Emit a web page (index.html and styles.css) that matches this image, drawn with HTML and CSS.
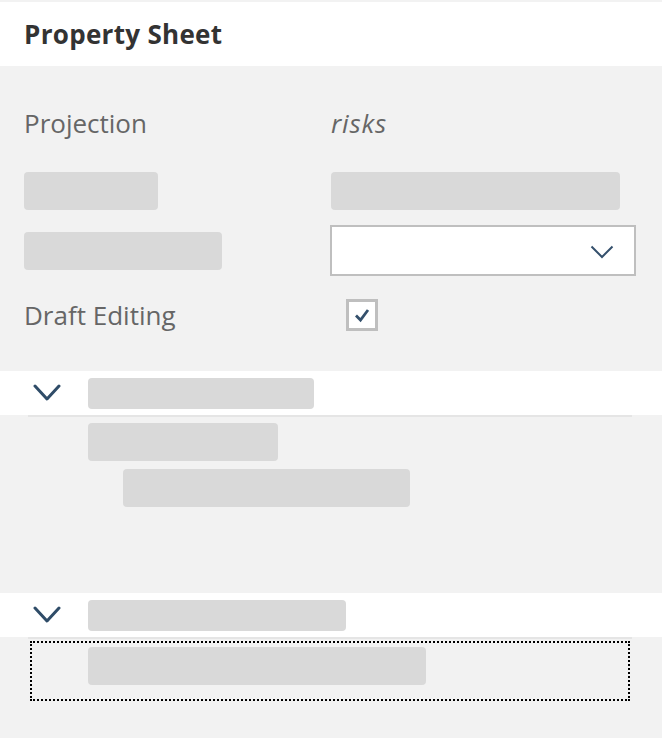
FILE: index.html
```html
<!DOCTYPE html>
<html>
<head>
<meta charset="utf-8">
<link rel="stylesheet" href="styles.css">
</head>
<body>
<div class="panel">
  <header class="header"><h1 class="title">Property Sheet</h1></header>
  <div class="form">
    <div class="row row-projection">
      <span class="label">Projection</span>
      <span class="value-italic">risks</span>
    </div>
    <div class="row row-skel">
      <div class="skel" style="width:134px"></div>
      <div class="skel" style="width:289px"></div>
    </div>
    <div class="row row-select">
      <div class="skel" style="width:198px"></div>
      <div class="select">
        <svg class="chev-sm" width="24" height="14" viewBox="0 0 24 14"><path d="M1.5 1.5 L12 12 L22.5 1.5" fill="none" stroke="#34506c" stroke-width="2"/></svg>
      </div>
    </div>
    <div class="row row-check">
      <span class="label">Draft Editing</span>
      <div class="checkbox">
        <svg width="18" height="18" viewBox="0 0 18 18"><path d="M3 9.5 L7.5 14 L15 4" fill="none" stroke="#34506c" stroke-width="2.8"/></svg>
      </div>
    </div>
  </div>

  <section class="section sec1">
    <div class="sec-head">
      <svg class="chev" width="28" height="18" viewBox="0 0 28 18"><path d="M2 2 L14 15 L26 2" fill="none" stroke="#2f4c68" stroke-width="3" stroke-linecap="round" stroke-linejoin="round"/></svg>
      <div class="skel skel-head" style="width:226px"></div>
    </div>
    <div class="sec-line"></div>
    <div class="sec-body">
      <div class="skel" style="width:190px"></div>
      <div class="skel indent" style="width:287px"></div>
    </div>
  </section>

  <section class="section sec2">
    <div class="sec-head">
      <svg class="chev" width="28" height="18" viewBox="0 0 28 18"><path d="M2 2 L14 15 L26 2" fill="none" stroke="#2f4c68" stroke-width="3" stroke-linecap="round" stroke-linejoin="round"/></svg>
      <div class="skel skel-head" style="width:258px"></div>
    </div>
    <div class="sec-line"></div>
    <div class="focus-box">
      <div class="skel" style="width:338px"></div>
    </div>
  </section>
</div>
</body>
</html>
```

FILE: styles.css
```css
html, body {
  margin: 0;
  padding: 0;
  background: #f2f2f2;
}
body {
  font-family: "Open Sans", "Noto Sans", sans-serif;
  width: 662px;
  height: 738px;
  overflow: hidden;
}
.panel {
  padding-top: 2px;
}
.header {
  background: #ffffff;
  height: 64px;
  display: flex;
  align-items: center;
  padding-left: 24px;
}
.title {
  margin: 0;
  font-size: 26px;
  font-weight: 700;
  color: #333333;
  letter-spacing: 0.3px;
}
.form {
  padding: 0 0 0 24px;
  display: flex;
  flex-direction: column;
}
.row {
  display: grid;
  grid-template-columns: 307px 1fr;
  align-items: center;
}
.row-projection {
  height: 58px;
  margin-top: 28px;
}
.label {
  font-size: 26px;
  color: #666666;
}
.value-italic {
  font-size: 26px;
  font-style: italic;
  color: #666666;
  letter-spacing: 0.8px;
}
.skel {
  background: #d9d9d9;
  border-radius: 4px;
  height: 38px;
}
.row-skel {
  margin-top: 20px;
}
.row-select {
  margin-top: 15px;
  grid-template-columns: 306px 1fr;
}
.select {
  width: 306px;
  height: 51px;
  box-sizing: border-box;
  border: 2px solid #bfbfbf;
  background: #ffffff;
  display: flex;
  align-items: center;
  justify-content: flex-end;
  padding-right: 20px;
}
.chev-sm {
  display: block;
  margin-top: 2px;
}
.row-check {
  margin-top: 21px;
  height: 34px;
}
.checkbox {
  width: 32px;
  height: 32px;
  box-sizing: border-box;
  border: 3px solid #bfbfbf;
  background: #ffffff;
  margin-left: 15px;
  display: flex;
  align-items: center;
  justify-content: center;
}
.checkbox svg {
  display: block;
}
.section {
  display: flex;
  flex-direction: column;
}
.sec1 {
  margin-top: 40px;
  height: 222px;
}
.sec-head {
  background: #ffffff;
  height: 44px;
  display: flex;
  align-items: center;
}
.chev {
  display: block;
  margin-left: 33px;
  margin-right: 27px;
}
.skel-head {
  height: 31px;
}
.sec-line {
  height: 2px;
  background: #e5e5e5;
  margin: 0 30px 0 28px;
}
.sec-body {
  padding: 6px 0 0 88px;
  display: flex;
  flex-direction: column;
  gap: 8px;
}
.indent {
  margin-left: 35px;
}
.focus-box {
  margin: 2px 32px 0 30px;
  height: 60px;
  box-sizing: border-box;
  border: 2px dotted #000000;
  padding: 4px 0 0 56px;
}
```
